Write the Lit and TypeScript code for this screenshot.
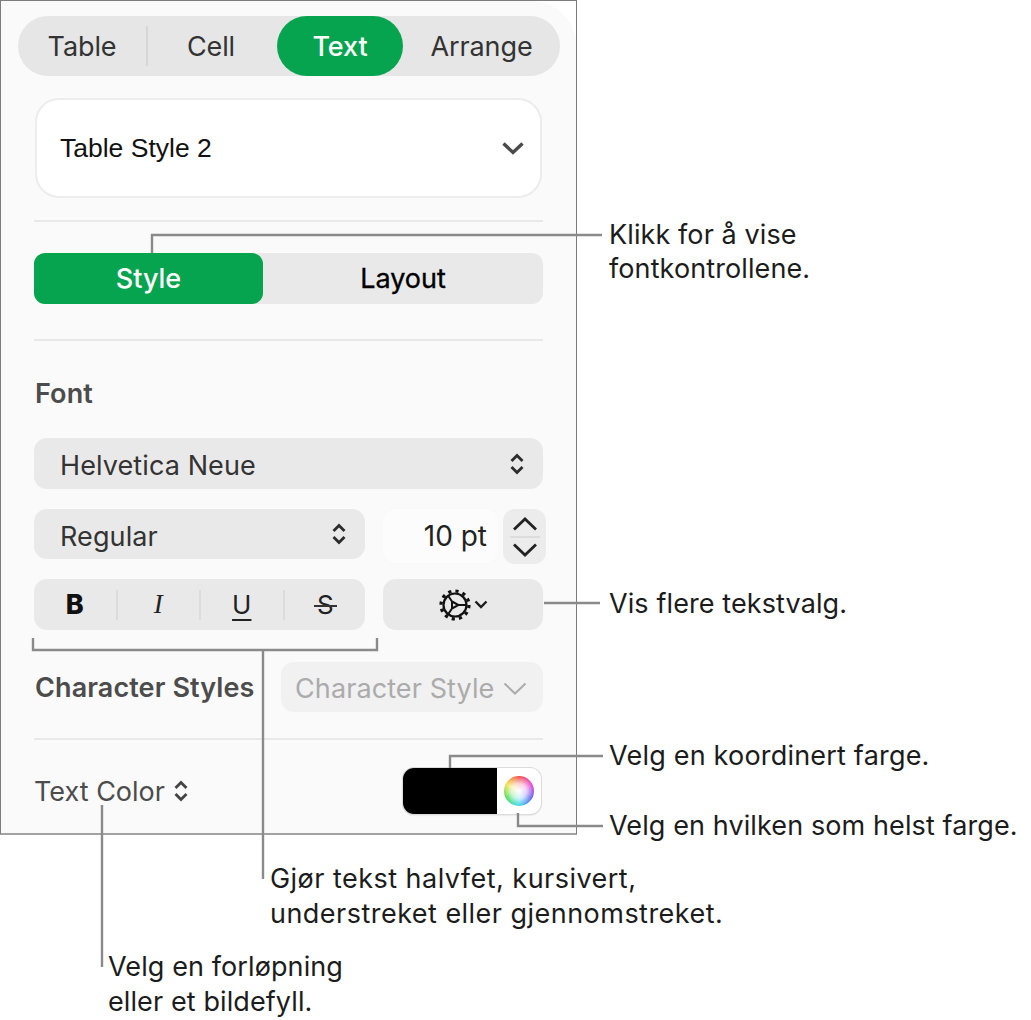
import { LitElement, css, html, svg } from "lit";
import { customElement } from "lit/decorators.js";

const upDown = html`<svg class="updown" viewBox="0 0 16 22"><path d="M2.5 8 8 2.5 13.5 8M2.5 14 8 19.5 13.5 14"/></svg>`;

// spokes + toothed ring of the gear button
const gear = html`<svg class="gear" viewBox="0 0 32 32">
  <circle class="teeth" cx="16" cy="16" r="14"/>
  <circle class="ring" cx="16" cy="16" r="11.5"/>
  <path class="spoke" d="M13 12.5 9 6.5M13 19.5 9 25.5M19.5 16H27.5M13 12.5 19.5 16 13 19.5Z"/>
</svg>`;

const leaders = [
  "M152 253V235H602",
  "M544 603H600",
  "M450 768V756H603",
  "M518 813V826H603",
  "M33 638V650H377V638",
  "M263 650V879",
  "M102 805V967",
];

const notes = [
  { cls: "n1", lines: ["Klikk for å vise", "fontkontrollene."] },
  { cls: "n2", lines: ["Vis flere tekstvalg."] },
  { cls: "n3", lines: ["Velg en koordinert farge."] },
  { cls: "n4", lines: ["Velg en hvilken som helst farge."] },
  { cls: "n5", lines: ["Gjør tekst halvfet, kursivert,", "understreket eller gjennomstreket."] },
  { cls: "n6", lines: ["Velg en forløpning", "eller et bildefyll."] },
];

@customElement("app-root")
export class AppRoot extends LitElement {
  render() {
    return html`
      <div class="page">
        <div class="frame">
          <div class="panel">
            <div class="tabs">
              <span class="tab t1">Table</span>
              <i class="tab-sep"></i>
              <span class="tab t2">Cell</span>
              <span class="tab t3 on">Text</span>
              <span class="tab t4">Arrange</span>
            </div>

            <div class="style-pick">
              <span>Table Style 2</span>
              <svg class="chev" viewBox="0 0 24 14"><path d="M2.5 2.5 12 11.5 21.5 2.5"/></svg>
            </div>
            <div class="rule r1"></div>

            <div class="segment">
              <span class="seg on">Style</span>
              <span class="seg rest">Layout</span>
            </div>
            <div class="rule r2"></div>

            <div class="heading">Font</div>
            <div class="select family"><span>Helvetica Neue</span>${upDown}</div>

            <div class="row size-row">
              <div class="select face"><span>Regular</span>${upDown}</div>
              <div class="size">10 pt</div>
              <div class="stepper">
                <svg viewBox="0 0 26 14"><path d="M2 12.5 13 2 24 12.5"/></svg>
                <i></i>
                <svg viewBox="0 0 26 14"><path d="M2 1.5 13 12 24 1.5"/></svg>
              </div>
            </div>

            <div class="row biu-row">
              <div class="biu">
                <span class="b">B</span><i></i>
                <span class="it">I</span><i></i>
                <span class="u">U</span><i></i>
                <span class="s">S</span>
              </div>
              <div class="more">
                ${gear}
                <svg class="more-chev" viewBox="0 0 14 9"><path d="M1.5 1.5 7 7 12.5 1.5"/></svg>
              </div>
            </div>

            <div class="row char-row">
              <span class="heading inline">Character Styles</span>
              <div class="char-pick">
                <span>Character Style</span>
                <svg viewBox="0 0 24 13"><path d="M1.5 1.5 12 11.5 22.5 1.5"/></svg>
              </div>
            </div>
            <div class="rule r3"></div>

            <div class="row color-row">
              <div class="color-label"><span>Text Color</span>${upDown}</div>
              <div class="swatch"><div class="black"></div><div class="well"><div class="wheel"></div></div></div>
            </div>
          </div>
        </div>

        <svg class="leaders" viewBox="0 0 1031 1020">
          ${leaders.map((d) => svg`<path d=${d}/>`)}
        </svg>
        ${notes.map(
          (n) => html`<div class="note ${n.cls}">${n.lines.map((l) => html`<div>${l}</div>`)}</div>`
        )}
      </div>
    `;
  }

  static styles = css`
    :host {
      display: block;
      font-family: "Inter", "Liberation Sans", sans-serif;
    }

    .page {
      position: relative;
      width: 1031px;
      height: 1020px;
      background: #fff;
      overflow: hidden;
    }

    .frame {
      width: 577px;
      height: 835px;
      box-sizing: border-box;
      border: 1px solid #7d7d7d;
      border-bottom: 2px solid #a2a2a2;
      background: #fff;
    }

    .panel {
      height: 100%;
      box-sizing: border-box;
      background: #fafafa;
      border-top-right-radius: 44px;
      padding: 15px 33px 0;
      display: flex;
      flex-direction: column;
      align-items: stretch;
    }

    .tabs {
      margin: 0 -16px;
      width: 542px;
      height: 60px;
      flex: none;
      border-radius: 30px;
      background: #e6e6e6;
      display: flex;
      align-items: center;
      color: #333;
      font-size: 27px;
      letter-spacing: -0.1px;
    }

    .tab {
      height: 60px;
      display: flex;
      align-items: center;
      justify-content: center;
    }

    .t1 { width: 128px; }
    .t2 { width: 129px; box-sizing: border-box; padding-right: 3px; }
    .t3 { width: 126px; }
    .t4 { width: 157px; }

    .tab-sep {
      width: 2px;
      height: 40px;
      background: #d6d6d6;
    }

    .tab.on {
      background: #06a44f;
      color: #fff;
      font-weight: 500;
      border-radius: 30px;
    }

    .style-pick {
      margin: 22px 1px 0;
      height: 100px;
      flex: none;
      box-sizing: border-box;
      border: 2px solid #ececec;
      border-radius: 24px;
      background: #fff;
      display: flex;
      align-items: center;
      justify-content: space-between;
      padding: 0 15px 0 23px;
      font-family: "Liberation Sans", sans-serif;
      font-size: 26.5px;
      color: #111;
    }

    .chev {
      width: 24px;
      height: 14px;
      fill: none;
      stroke: #4a4a4a;
      stroke-width: 3.4;
    }

    .rule {
      height: 2px;
      flex: none;
      background: #e8e8e8;
    }

    .r1 { margin-top: 22px; }
    .r2 { margin-top: 35px; }
    .r3 { margin-top: 26px; }

    .segment {
      margin-top: 31px;
      height: 51px;
      flex: none;
      border-radius: 11px;
      background: #e9e9e9;
      display: flex;
      font-size: 27px;
    }

    .seg {
      display: flex;
      align-items: center;
      justify-content: center;
    }

    .seg.on {
      width: 229px;
      border-radius: 11px;
      background: #06a44f;
      color: #fff;
      font-weight: 500;
    }

    .seg.rest {
      flex: 1;
      color: #000;
      font-weight: 400;
      -webkit-text-stroke: 0.35px #000;
    }

    .heading {
      margin-top: 38px;
      padding-left: 1px;
      height: 30px;
      line-height: 30px;
      flex: none;
      font-size: 27px;
      letter-spacing: 0.1px;
      font-weight: 600;
      color: #4c4c4c;
    }

    .heading.inline {
      margin-top: 2px;
      white-space: nowrap;
      width: 246px;
    }

    .select {
      height: 51px;
      flex: none;
      box-sizing: border-box;
      border-radius: 13px;
      background: #e9e9e9;
      display: flex;
      align-items: center;
      justify-content: space-between;
      padding: 0 18px 0 26px;
      font-size: 27px;
      letter-spacing: 0.1px;
      color: #333;
    }

    .select span {
      padding-top: 4px;
    }

    .family {
      margin-top: 29px;
    }

    .updown {
      width: 16px;
      height: 22px;
      flex: none;
      fill: none;
      stroke: #2c2c2c;
      stroke-width: 2.8;
    }

    .row {
      display: flex;
      flex: none;
    }

    .size-row {
      margin-top: 20px;
      height: 50px;
      align-items: flex-start;
    }

    .face {
      width: 331px;
      height: 50px;
    }

    .size {
      margin-left: 18px;
      width: 115px;
      height: 54px;
      flex: none;
      box-sizing: border-box;
      border-radius: 12px;
      background: #fcfcfc;
      box-shadow: 0 0 3px rgba(0, 0, 0, 0.02);
      padding-right: 11px;
      display: flex;
      align-items: center;
      justify-content: flex-end;
      font-size: 28px;
      color: #222;
    }

    .stepper {
      margin-left: 5px;
      width: 43px;
      height: 55px;
      flex: none;
      border-radius: 12px;
      background: #ececec;
      display: flex;
      flex-direction: column;
      align-items: center;
      justify-content: center;
    }

    .stepper svg {
      width: 26px;
      height: 14px;
      fill: none;
      stroke: #222;
      stroke-width: 2.8;
    }

    .stepper i {
      width: 30px;
      height: 2px;
      margin: 5px 0;
      background: #dcdcdc;
    }

    .biu-row {
      margin-top: 20px;
      height: 51px;
    }

    .biu {
      width: 331px;
      border-radius: 13px;
      background: #e9e9e9;
      display: flex;
      align-items: center;
      color: #222;
      font-size: 26px;
    }

    .biu span {
      width: 81.5px;
      flex: none;
      text-align: center;
      position: relative;
    }

    .biu i {
      width: 2px;
      height: 30px;
      flex: none;
      background: #dcdcdc;
    }

    .biu .b {
      font-weight: 800;
      font-size: 27px;
      color: #111;
    }

    .biu .it {
      font-family: "Liberation Serif", serif;
      font-style: italic;
      font-size: 27px;
    }

    .biu .u {
      text-decoration: underline;
      text-decoration-thickness: 2px;
      text-underline-offset: 5px;
    }

    .biu .s::after {
      content: "";
      position: absolute;
      left: 29px;
      right: 29px;
      top: 16px;
      height: 2px;
      background: #333;
    }

    .more {
      margin-left: 18px;
      flex: 1;
      border-radius: 13px;
      background: #e9e9e9;
      display: flex;
      align-items: center;
      justify-content: center;
      gap: 3px;
    }

    .gear {
      width: 32px;
      height: 32px;
      fill: none;
      stroke: #111;
    }

    .gear .ring {
      stroke-width: 2.2;
    }

    .gear .spoke {
      stroke-width: 2;
    }

    .gear .teeth {
      stroke-width: 3.2;
      stroke-dasharray: 3.2 4.13;
    }

    .more-chev {
      width: 14px;
      height: 9px;
      fill: none;
      stroke: #1c1c1c;
      stroke-width: 2.4;
    }

    .char-row {
      margin-top: 32px;
      height: 50px;
      align-items: center;
    }

    .char-pick {
      flex: 1;
      height: 50px;
      box-sizing: border-box;
      border-radius: 13px;
      background: #f1f1f1;
      display: flex;
      align-items: center;
      justify-content: space-between;
      padding: 2px 16px 0 14px;
      color: #ababab;
      font-size: 27px;
      letter-spacing: 0.1px;
      white-space: nowrap;
    }

    .char-pick svg {
      width: 24px;
      height: 13px;
      flex: none;
      fill: none;
      stroke: #ababab;
      stroke-width: 2;
    }

    .color-row {
      margin-top: 28px;
      height: 46px;
      align-items: center;
      justify-content: space-between;
    }

    .color-label {
      display: flex;
      align-items: center;
      gap: 8px;
      font-size: 27px;
      color: #4c4c4c;
    }

    .color-label .updown {
      stroke: #444;
    }

    .swatch {
      margin-right: 2px;
      width: 138px;
      height: 46px;
      box-sizing: border-box;
      border-radius: 11px;
      overflow: hidden;
      background: #fff;
      box-shadow: 0 0 0 1px #dcdcdc, 0 1px 2px rgba(0, 0, 0, 0.2);
      display: flex;
    }

    .black {
      width: 94px;
      background: #000;
    }

    .well {
      flex: 1;
      display: flex;
      align-items: center;
      justify-content: center;
    }

    .wheel {
      width: 30px;
      height: 30px;
      border-radius: 50%;
      background:
        radial-gradient(circle, #fff 0%, rgba(255, 255, 255, 0.75) 35%, rgba(255, 255, 255, 0) 72%),
        conic-gradient(#f5443c, #e83ad0, #5a5cf0, #2fd6ee, #3fdc4c, #f0e03c, #f5443c);
    }

    /* callouts sit over the panel */
    .leaders {
      position: absolute;
      inset: 0;
      width: 1031px;
      height: 1020px;
      pointer-events: none;
      fill: none;
      stroke: #8a8a8a;
      stroke-width: 2.4;
    }

    .note {
      position: absolute;
      font-size: 27px;
      line-height: 35px;
      letter-spacing: 0.1px;
      color: #1c1c1c;
      white-space: nowrap;
    }

    .n1 { left: 609px; top: 218px; line-height: 34px; }
    .n2 { left: 609px; top: 586px; }
    .n3 { left: 609px; top: 738px; letter-spacing: 0.2px; }
    .n4 { left: 609px; top: 808px; }
    .n5 { left: 270px; top: 861px; letter-spacing: 0.47px; }
    .n6 { left: 108px; top: 949px; }
  `;
}
